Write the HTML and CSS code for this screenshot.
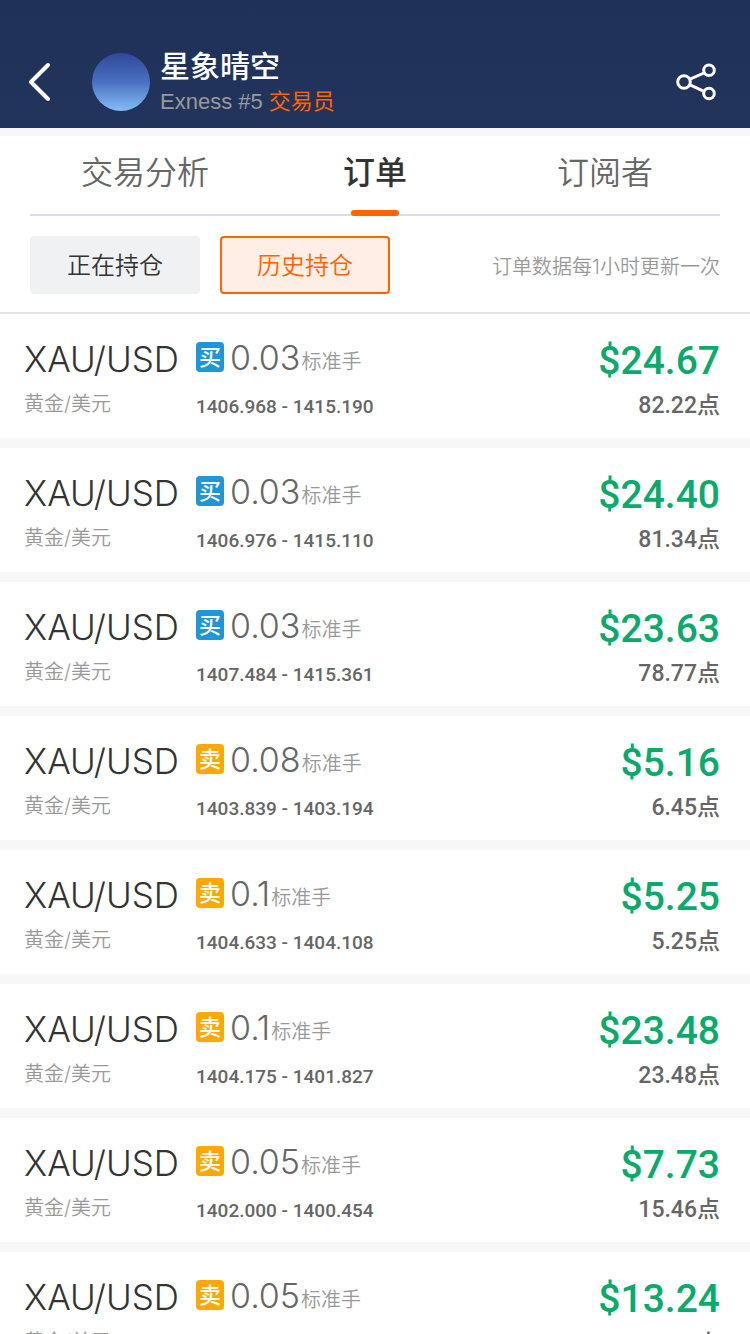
FILE: index.html
```
<!DOCTYPE html>
<html lang="zh-CN">
<head>
<meta charset="utf-8">
<meta name="viewport" content="width=device-width, initial-scale=1">
<title>星象晴空 - 订单</title>
<link rel="stylesheet" href="styles.css">
</head>
<body>
<div class="app">
  <header class="header">
    <button class="icon-button" type="button" aria-label="返回">
      <svg width="40" height="48" viewBox="0 0 40 48" fill="none" stroke="#fff" stroke-width="4" stroke-linecap="round" stroke-linejoin="round"><path d="M28 7 11 24 28 41"/></svg>
    </button>
    <div class="avatar"></div>
    <div class="profile">
      <h1 class="name">星象晴空</h1>
      <p class="account">Exness #5 <span class="role">交易员</span></p>
    </div>
    <button class="icon-button" type="button" aria-label="分享">
      <svg width="48" height="48" viewBox="0 0 48 48" fill="none" stroke="#fff" stroke-width="3"><circle cx="14" cy="24" r="6.3"/><circle cx="39" cy="12.300" r="5.300"/><circle cx="39" cy="35.500" r="5.300"/><path d="M20 21.200 34 15M20 26.800 34 33.300"/></svg>
    </button>
  </header>

  <nav class="tabs" aria-label="交易员信息">
    <a class="tab" href="#analysis">交易分析</a>
    <a class="tab tab-active" href="#orders" aria-current="page">订单</a>
    <a class="tab" href="#followers">订阅者</a>
  </nav>

  <div class="filters">
    <button class="filter" type="button">正在持仓</button>
    <button class="filter filter-active" type="button">历史持仓</button>
    <p class="hint">订单数据每1小时更新一次</p>
  </div>

  <main class="orders" id="orders">
    <article class="order">
      <div class="symbol"><h2 class="pair">XAU/USD</h2><p class="pair-name">黄金/美元</p></div>
      <div class="trade"><p class="volume"><span class="side buy">买</span><span class="lots">0.03</span><span class="unit">标准手</span></p><p class="range">1406.968 - 1415.190</p></div>
      <div class="result"><p class="profit">$24.67</p><p class="points">82.22点</p></div>
    </article>
    <article class="order">
      <div class="symbol"><h2 class="pair">XAU/USD</h2><p class="pair-name">黄金/美元</p></div>
      <div class="trade"><p class="volume"><span class="side buy">买</span><span class="lots">0.03</span><span class="unit">标准手</span></p><p class="range">1406.976 - 1415.110</p></div>
      <div class="result"><p class="profit">$24.40</p><p class="points">81.34点</p></div>
    </article>
    <article class="order">
      <div class="symbol"><h2 class="pair">XAU/USD</h2><p class="pair-name">黄金/美元</p></div>
      <div class="trade"><p class="volume"><span class="side buy">买</span><span class="lots">0.03</span><span class="unit">标准手</span></p><p class="range">1407.484 - 1415.361</p></div>
      <div class="result"><p class="profit">$23.63</p><p class="points">78.77点</p></div>
    </article>
    <article class="order">
      <div class="symbol"><h2 class="pair">XAU/USD</h2><p class="pair-name">黄金/美元</p></div>
      <div class="trade"><p class="volume"><span class="side sell">卖</span><span class="lots">0.08</span><span class="unit">标准手</span></p><p class="range">1403.839 - 1403.194</p></div>
      <div class="result"><p class="profit">$5.16</p><p class="points">6.45点</p></div>
    </article>
    <article class="order">
      <div class="symbol"><h2 class="pair">XAU/USD</h2><p class="pair-name">黄金/美元</p></div>
      <div class="trade"><p class="volume"><span class="side sell">卖</span><span class="lots">0.1</span><span class="unit">标准手</span></p><p class="range">1404.633 - 1404.108</p></div>
      <div class="result"><p class="profit">$5.25</p><p class="points">5.25点</p></div>
    </article>
    <article class="order">
      <div class="symbol"><h2 class="pair">XAU/USD</h2><p class="pair-name">黄金/美元</p></div>
      <div class="trade"><p class="volume"><span class="side sell">卖</span><span class="lots">0.1</span><span class="unit">标准手</span></p><p class="range">1404.175 - 1401.827</p></div>
      <div class="result"><p class="profit">$23.48</p><p class="points">23.48点</p></div>
    </article>
    <article class="order">
      <div class="symbol"><h2 class="pair">XAU/USD</h2><p class="pair-name">黄金/美元</p></div>
      <div class="trade"><p class="volume"><span class="side sell">卖</span><span class="lots">0.05</span><span class="unit">标准手</span></p><p class="range">1402.000 - 1400.454</p></div>
      <div class="result"><p class="profit">$7.73</p><p class="points">15.46点</p></div>
    </article>
    <article class="order">
      <div class="symbol"><h2 class="pair">XAU/USD</h2><p class="pair-name">黄金/美元</p></div>
      <div class="trade"><p class="volume"><span class="side sell">卖</span><span class="lots">0.05</span><span class="unit">标准手</span></p><p class="range">1402.000 - 1400.454</p></div>
      <div class="result"><p class="profit">$13.24</p><p class="points">26.48点</p></div>
    </article>
  </main>
</div>
</body>
</html>
```
FILE: styles.css
```
* {
  box-sizing: border-box;
}

body,
h1,
h2,
p {
  margin: 0;
  font-weight: inherit;
}

body {
  background: #f7f7f7;
  font-family: Inter, "Noto Sans CJK SC", sans-serif;
  font-weight: 350;
  color: #333;
}

button {
  font: inherit;
  cursor: pointer;
}

.app {
  display: flex;
  flex-direction: column;
  height: 100vh;
}

.header {
  display: flex;
  align-items: center;
  padding: 46px 32px 10px 20px;
  background: linear-gradient(#1f3159, #22345c);
  color: #fff;
}

.icon-button {
  display: flex;
  padding: 0;
  border: 0;
  background: none;
}

.avatar {
  width: 58px;
  height: 58px;
  margin-left: 32px;
  border-radius: 50%;
  background: linear-gradient(#2f489c, #4a70c0 50%, #84bdf5);
}

.profile {
  flex: 1;
  padding-left: 10px;
}

.name {
  font-size: 30px;
  line-height: 40px;
  font-weight: 500;
}

.account {
  font-family: "Liberation Sans", "Noto Sans CJK SC", sans-serif;
  font-size: 22px;
  line-height: 32px;
  color: #999;
}

.role {
  color: #ff6400;
  font-weight: 400;
}

.tabs {
  display: grid;
  grid-template-columns: repeat(3, 1fr);
  margin-top: 8px;
  padding: 0 30px;
  background: #fff;
}

.tab {
  display: flex;
  flex-direction: column;
  align-items: center;
  height: 80px;
  border-bottom: 2px solid #dddcea;
  font-size: 32px;
  line-height: 74px;
  color: #666;
  text-decoration: none;
}

.tab-active {
  font-weight: 500;
  color: #333;
}

.tab-active::after {
  content: "";
  flex: none;
  width: 48px;
  height: 6px;
  border-radius: 3px;
  background: #ff6400;
}

.filters {
  display: flex;
  align-items: center;
  gap: 20px;
  padding: 20px 30px 18px;
  border-bottom: 2px solid #e5e5e5;
  background: #fff;
}

.filter {
  width: 170px;
  height: 58px;
  padding: 0 0 4px;
  border: 2px solid #f0f1f3;
  border-radius: 4px;
  background: #f0f1f3;
  font-size: 24px;
  color: #333;
}

.filter-active {
  border-color: #ff6400;
  background: #ffeee6;
  color: #ff6400;
}

.hint {
  margin-left: auto;
  font-size: 20px;
  color: #999;
}

.orders {
  display: flex;
  flex: 1;
  flex-direction: column;
  gap: 10px;
  min-height: 0;
  overflow-y: auto;
  scrollbar-width: none;
}

.order {
  display: grid;
  flex: none;
  grid-template-columns: 172px 1fr auto;
  padding: 20px 30px 4px 24px;
  background: #fff;
}

.pair {
  font-size: 35px;
  line-height: 50px;
  font-weight: 300;
}

.pair-name {
  font-size: 20px;
  line-height: 40px;
  color: #999;
}

.volume {
  display: flex;
  align-items: center;
  height: 46px;
}

.side {
  width: 28px;
  height: 30px;
  margin-right: 6px;
  border-radius: 4px;
  font-size: 22px;
  line-height: 30px;
  font-weight: 500;
  text-align: center;
  color: #fff;
}

.buy {
  background: #1e96d8;
}

.sell {
  background: #ffa800;
}

.lots {
  font-size: 34px;
  font-weight: 300;
  color: #666;
}

.unit {
  padding: 6px 0 0 1px;
  font-size: 20px;
  color: #999;
}

.range {
  font-family: Roboto, sans-serif;
  font-size: 19px;
  line-height: 54px;
  font-weight: 500;
  color: #666;
}

.result {
  font-family: Roboto, "Noto Sans CJK SC", sans-serif;
  font-weight: 500;
  text-align: right;
}

.profit {
  font-size: 39px;
  line-height: 54px;
  color: #0aaa6c;
}

.points {
  font-size: 23px;
  line-height: 36px;
  color: #666;
}
```
